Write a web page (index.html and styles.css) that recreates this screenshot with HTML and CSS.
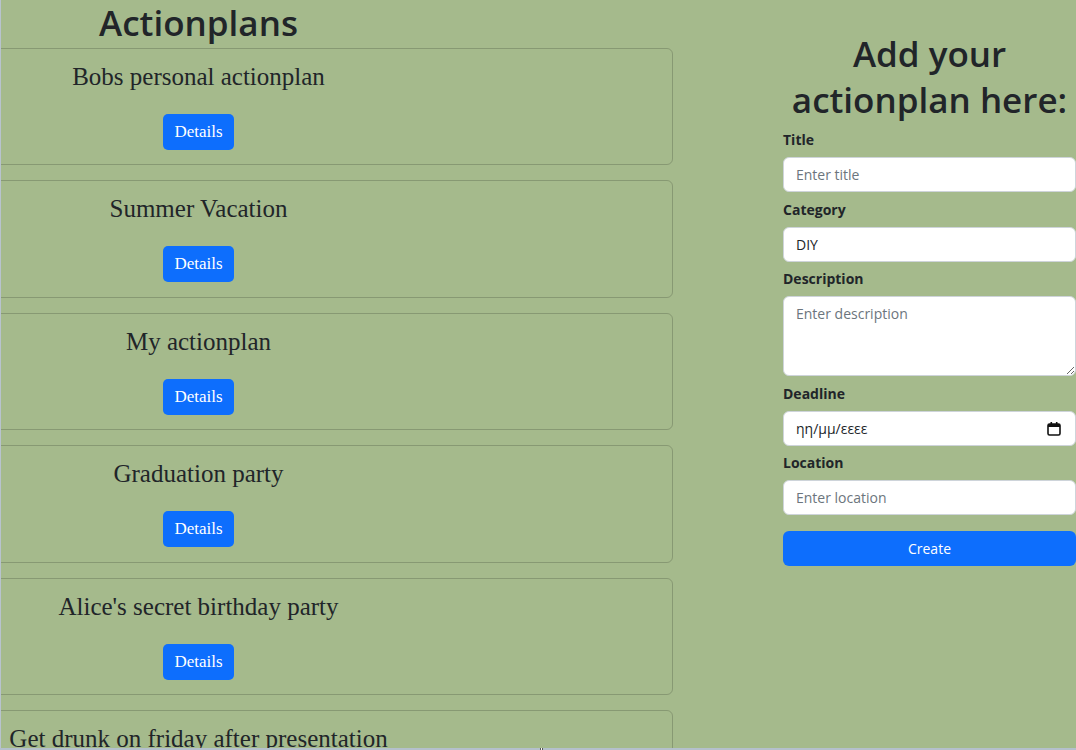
FILE: index.html
```html
<!DOCTYPE html>
<html lang="en">
<head>
<meta charset="utf-8">
<title>Actionplans</title>
<link rel="stylesheet" href="styles.css">
</head>
<body>
<div class="screen">
  <div class="page">
    <section class="plans">
      <h1 class="plans-title">Actionplans</h1>
      <div class="card"><div class="card-main"><h5 class="card-title">Bobs personal actionplan</h5><button class="btn-details" type="button">Details</button></div></div>
      <div class="card"><div class="card-main"><h5 class="card-title">Summer Vacation</h5><button class="btn-details" type="button">Details</button></div></div>
      <div class="card"><div class="card-main"><h5 class="card-title">My actionplan</h5><button class="btn-details" type="button">Details</button></div></div>
      <div class="card"><div class="card-main"><h5 class="card-title">Graduation party</h5><button class="btn-details" type="button">Details</button></div></div>
      <div class="card"><div class="card-main"><h5 class="card-title">Alice's secret birthday party</h5><button class="btn-details" type="button">Details</button></div></div>
      <div class="card"><div class="card-main"><h5 class="card-title">Get drunk on friday after presentation</h5><button class="btn-details" type="button">Details</button></div></div>
    </section>
    <section class="add">
      <h1 class="add-title">Add your<br>actionplan here:</h1>
      <form class="form">
        <div class="group"><label class="label">Title</label><input class="control" type="text" placeholder="Enter title"></div>
        <div class="group"><label class="label">Category</label><input class="control" type="text" value="DIY"></div>
        <div class="group"><label class="label">Description</label><textarea class="control area" placeholder="Enter description"></textarea></div>
        <div class="group"><label class="label">Deadline</label>
          <div class="control date"><span>ηη/μμ/εεεε</span>
            <svg class="cal" width="14" height="15" viewBox="0 0 14 15"><rect x="1" y="3" width="12" height="11" rx="1.5" fill="none" stroke="#111" stroke-width="1.6"/><rect x="1" y="3" width="12" height="3" fill="#111"/><rect x="3.5" y="1" width="1.6" height="3" fill="#111"/><rect x="8.9" y="1" width="1.6" height="3" fill="#111"/></svg>
          </div>
        </div>
        <div class="group"><label class="label">Location</label><input class="control" type="text" placeholder="Enter location"></div>
        <button class="btn-create" type="button">Create</button>
      </form>
    </section>
  </div>
  <div class="statusbar"><span class="marker"></span></div>
</div>
</body>
</html>
```
FILE: styles.css
```css
html, body {
  margin: 0;
  padding: 0;
  height: 100%;
  overflow: hidden;
}
body {
  background: #a5ba8c;
  color: #212529;
  font-family: "Open Sans", "Noto Sans", sans-serif;
}
.screen {
  height: 750px;
  display: flex;
  flex-direction: column;
}
.page {
  height: 748px;
  overflow: hidden;
  display: flex;
  border-left: 1px solid #b8c3ce;
}
.statusbar {
  height: 2px;
  background: #b4c0cc;
  display: flex;
}
.marker {
  margin-left: 540px;
  width: 3px;
  height: 2px;
  background: #fff;
  border-left: 1px solid #555;
  border-right: 1px solid #555;
  box-sizing: border-box;
}
.plans {
  width: 672px;
  flex: none;
}
.plans-title {
  width: 395px;
  margin: 0 0 2.4px;
  text-align: center;
  font-size: 35px;
  line-height: 45.6px;
  font-weight: 600;
}
.card {
  margin: 0 0 14.9px -10px;
  border: 1px solid rgba(0, 0, 0, 0.175);
  border-radius: 6px;
  padding: 14px 0 14.5px;
}
.card-main {
  width: 413px;
  display: flex;
  flex-direction: column;
  align-items: center;
}
.card-title {
  margin: 0 0 23px;
  font-family: "Liberation Serif", "Times New Roman", serif;
  font-weight: 400;
  font-size: 25px;
  line-height: 28px;
  white-space: nowrap;
}
.btn-details {
  width: 71px;
  height: 36px;
  border: 0;
  border-radius: 5px;
  background: #0d6efd;
  color: #fff;
  font-family: "Liberation Serif", "Times New Roman", serif;
  font-size: 17px;
  padding: 0;
}
.add {
  margin-left: 110px;
  width: 293px;
  flex: none;
}
.add-title {
  margin: 31px 0 7px;
  text-align: center;
  font-size: 35px;
  line-height: 45.6px;
  font-weight: 600;
  white-space: nowrap;
}
.form {
  display: flex;
  flex-direction: column;
}
.group {
  display: flex;
  flex-direction: column;
  margin-bottom: 6.5px;
}
.label {
  font-size: 14px;
  line-height: 21px;
  font-weight: 700;
  margin-bottom: 7px;
}
.control {
  box-sizing: border-box;
  width: 293px;
  height: 35px;
  padding: 6px 12px;
  border: 1px solid #ced4da;
  border-radius: 6px;
  background: #fff;
  font-family: "Open Sans", "Noto Sans", sans-serif;
  font-size: 14px;
  line-height: 21px;
  color: #212529;
  margin: 0;
}
.control::placeholder {
  color: #6c757d;
}
.area {
  height: 80px;
  resize: vertical;
}
.date {
  display: flex;
  align-items: center;
  justify-content: space-between;
  padding-right: 14px;
}
.cal {
  display: block;
}
.btn-create {
  margin-top: 9.5px;
  height: 35px;
  border: 0;
  border-radius: 6px;
  background: #0d6efd;
  color: #fff;
  font-family: "Open Sans", "Noto Sans", sans-serif;
  font-size: 14px;
}
```
